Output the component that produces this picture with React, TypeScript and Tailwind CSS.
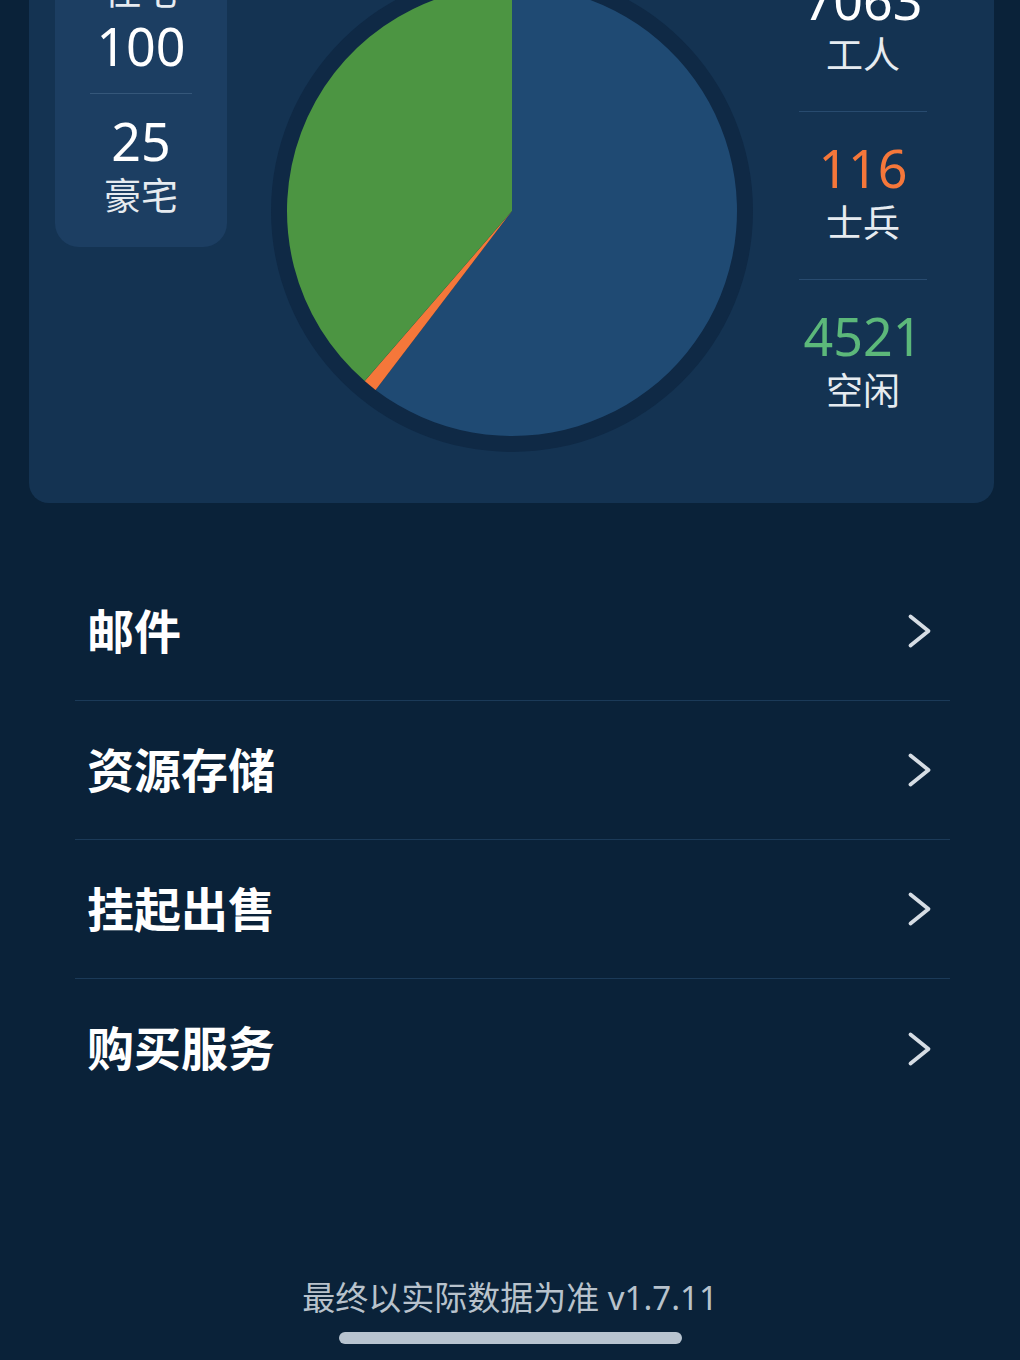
import React from 'react';

const pieData = [
  { value: 7063, color: '#1f4a73' },
  { value: 116, color: '#f5773a' },
  { value: 4521, color: '#4c9542' },
];

const polar = (cx: number, cy: number, r: number, deg: number) => {
  const rad = (deg * Math.PI) / 180;
  return [cx + r * Math.sin(rad), cy - r * Math.cos(rad)];
};

const PieChart = () => {
  const size = 482;
  const c = size / 2;
  const r = 225;
  const total = pieData.reduce((s, d) => s + d.value, 0);
  let start = 0;

  return (
    <svg width={size} height={size} viewBox={`0 0 ${size} ${size}`} className="shrink-0">
      <circle cx={c} cy={c} r={241} fill="#0f2945" />
      {pieData.map((d, i) => {
        const sweep = (d.value / total) * 360;
        const [x1, y1] = polar(c, c, r, start);
        const [x2, y2] = polar(c, c, r, start + sweep);
        const large = sweep > 180 ? 1 : 0;
        start += sweep;
        return (
          <path
            key={i}
            d={`M${c},${c} L${x1},${y1} A${r},${r} 0 ${large} 1 ${x2},${y2} Z`}
            fill={d.color}
          />
        );
      })}
    </svg>
  );
};

const Stat = ({ value, label, valueClass = 'text-white' }: { value: string; label: string; valueClass?: string }) => (
  <div className="flex flex-col items-center">
    <div className={`text-[52px] leading-[60px] ${valueClass}`}>{value}</div>
    <div className="text-[37px] leading-[50px] text-[#e6ebf0]">{label}</div>
  </div>
);

const Chevron = () => (
  <svg width="25" height="36" viewBox="0 0 25 36" fill="none">
    <polyline
      points="3.5,3.5 21.5,18 3.5,32.5"
      stroke="#d6dde4"
      strokeWidth="3.8"
      strokeLinecap="round"
      strokeLinejoin="round"
    />
  </svg>
);

const menuItems = ['邮件', '资源存储', '挂起出售', '购买服务'];

export default function App() {
  return (
    <div
      className="min-h-[1360px] bg-[#0a2239] flex flex-col overflow-hidden"
      style={{ fontFamily: '"Noto Sans", "Noto Sans CJK SC", sans-serif' }}
    >
      {/* Overview card, top scrolled out of view */}
      <div className="ml-[29px] mr-[26px] mt-[-60px] bg-[#143352] rounded-[20px] flex items-start pl-[26px] pt-[30px] pb-[51px]">
        <div className="w-[172px] mt-[-30px] bg-[#1c3e62] rounded-[24px] pt-[26px] pb-[26px] flex flex-col">
          <div className="text-[37px] leading-[50px] text-[#e6ebf0] text-center">住宅</div>
          <div className="text-[52px] leading-[60px] text-white text-center">100</div>
          <div className="mx-[35px] my-[17px] h-px bg-[#35577a]" />
          <Stat value="25" label="豪宅" />
        </div>

        <div className="ml-[44px]">
          <PieChart />
        </div>

        <div className="w-[128px] ml-[46px] flex flex-col">
          <div className="pb-[31px]">
            <Stat value="7063" label="工人" />
          </div>
          <div className="h-px bg-[#284b6f]" />
          <div className="pt-[26px] pb-[31px]">
            <Stat value="116" label="士兵" valueClass="text-[#f5773a]" />
          </div>
          <div className="h-px bg-[#284b6f]" />
          <div className="pt-[26px]">
            <Stat value="4521" label="空闲" valueClass="text-[#5cb87a]" />
          </div>
        </div>
      </div>

      {/* Menu list */}
      <div className="ml-[75px] mr-[70px] mt-[59px] flex flex-col">
        {menuItems.map((item, i) => (
          <div
            key={item}
            className={`h-[139px] flex items-center justify-between pl-[12px] pr-[18px] ${
              i < menuItems.length - 1 ? 'border-b border-[#1b3a58]' : ''
            }`}
          >
            <span className="text-[47px] font-bold text-white leading-none">{item}</span>
            <Chevron />
          </div>
        ))}
      </div>

      {/* Footer */}
      <div className="mt-[160px] text-center text-[33px] leading-[40px] text-[#b8c2cc]">
        最终以实际数据为准 v1.7.11
      </div>
      <div className="mt-[14px] mx-auto w-[343px] h-[12px] rounded-full bg-[#b8c4d0]" />
    </div>
  );
}
